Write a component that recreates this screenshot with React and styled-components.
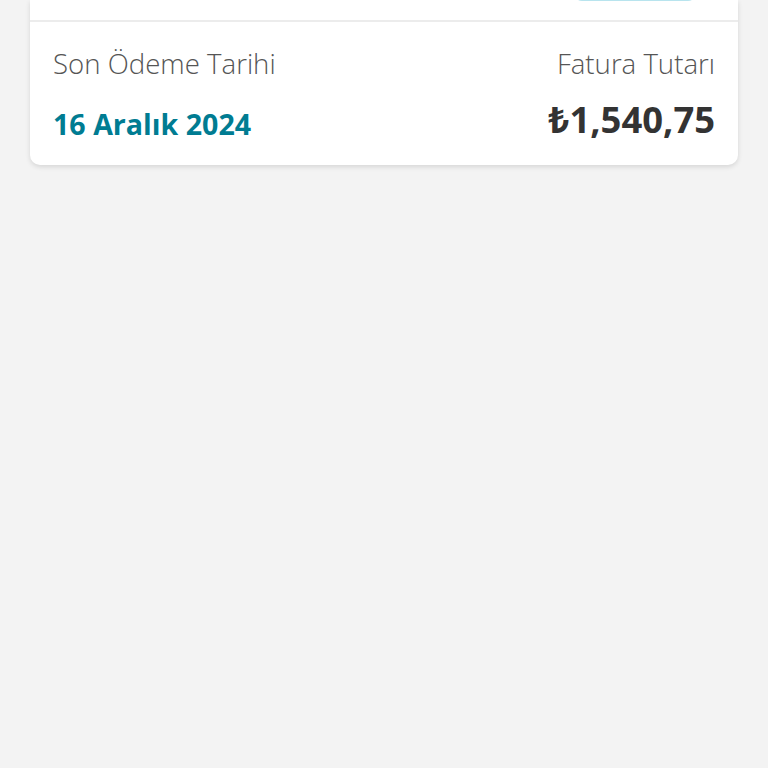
import React from "react";
import styled, { createGlobalStyle } from "styled-components";

const GlobalStyle = createGlobalStyle`
  html, body {
    margin: 0;
    padding: 0;
    background: #f3f3f3;
    font-family: "Open Sans", "Noto Sans", sans-serif;
  }
`;

const Page = styled.div`
  min-height: 768px;
  padding: 0 30px;
  background: #f3f3f3;
`;

const Card = styled.div`
  background: #ffffff;
  border-radius: 0 0 10px 10px;
  box-shadow: 0 2px 5px rgba(0, 0, 0, 0.12);
  overflow: hidden;
`;

const TopBar = styled.div`
  height: 20px;
  display: flex;
  justify-content: flex-end;
  padding: 0 42px 0 0;
  border-bottom: 2px solid #ececec;
`;

const TopButton = styled.div`
  width: 122px;
  height: 40px;
  margin-top: -39px;
  border-radius: 8px;
  background: #b8e4ee;
`;

const Details = styled.div`
  display: flex;
  justify-content: space-between;
  padding: 22px 23px 23px;
`;

const Column = styled.div`
  display: flex;
  flex-direction: column;
  align-items: ${(p) => (p.$right ? "flex-end" : "flex-start")};
`;

const Label = styled.div`
  font-size: 27.6px;
  font-weight: 300;
  color: #555555;
  line-height: 38px;
`;

const DateValue = styled.div`
  margin-top: 24px;
  font-size: 28.6px;
  font-weight: 700;
  color: #007c92;
  line-height: 36px;
`;

const Amount = styled.div`
  margin-top: 16px;
  font-size: 36.4px;
  font-weight: 700;
  color: #333333;
  line-height: 42px;
`;

export default function App() {
  return (
    <>
      <GlobalStyle />
      <Page>
        <Card>
          <TopBar>
            <TopButton />
          </TopBar>
          <Details>
            <Column>
              <Label>Son Ödeme Tarihi</Label>
              <DateValue>16 Aralık 2024</DateValue>
            </Column>
            <Column $right>
              <Label>Fatura Tutarı</Label>
              <Amount>₺1,540,75</Amount>
            </Column>
          </Details>
        </Card>
      </Page>
    </>
  );
}
